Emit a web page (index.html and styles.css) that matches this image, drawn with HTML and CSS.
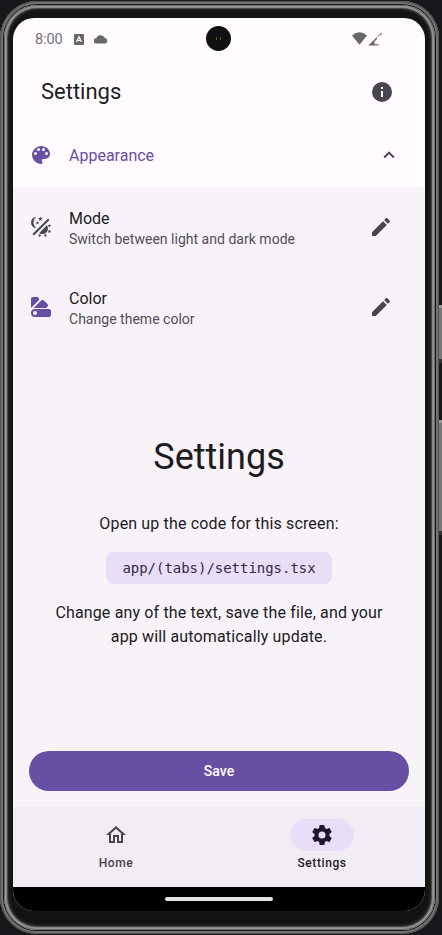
FILE: index.html
```html
<!DOCTYPE html>
<html lang="en">
<head>
<meta charset="utf-8">
<title>Settings</title>
<link rel="stylesheet" href="styles.css">
</head>
<body>
<div class="stage">
  <span class="side-button power"></span>
  <span class="side-button volume"></span>
  <div class="phone">
    <div class="bezel">
    <div class="screen">
      <header class="status">
        <span class="clock">8:00</span>
        <svg class="badge-a" viewBox="0 0 10 11"><path fill="#68676a" d="M1 0h8q1 0 1 1v9q0 1-1 1H1q-1 0-1-1V1q0-1 1-1z"/><path d="M2.600 8 5 2.800 7.400 8M3.500 6.500h3" fill="none" stroke="#fff" stroke-width="1.200"/></svg>
        <svg class="cloud" viewBox="0 0 14 9"><path fill="#68676a" d="M2.600 8.600A2.700 2.700 0 0 1 2.200 3.200A4.600 4.600 0 0 1 10.800 3.100A2.800 2.800 0 0 1 11.200 8.600z"/></svg>
        <span class="camera"><i></i><i></i></span>
        <svg class="signals" viewBox="0 0 30 14"><path fill="#68676a" d="M0 3.400Q7.500-2.800 15 3.400L7.500 12.800z"/><path fill="#68676a" d="M16.300 13.500 25 5V7L22.500 9.500V12.300H26.500V13.500z"/><path d="M25 5 29.500 .5V3H28L26 5z" fill="#68676a"/></svg>
      </header>
      <div class="appbar">
        <h1>Settings</h1>
        <svg class="icon info" viewBox="0 0 24 24"><path d="M13 9h-2V7h2m0 10h-2v-6h2m-1-9A10 10 0 0 0 2 12a10 10 0 0 0 10 10 10 10 0 0 0 10-10A10 10 0 0 0 12 2z"/></svg>
      </div>
      <div class="row accordion">
        <svg class="icon purple" viewBox="0 0 24 24"><path d="M17.500 12A1.500 1.500 0 0 1 16 10.500 1.500 1.500 0 0 1 17.500 9a1.500 1.500 0 0 1 1.500 1.500 1.500 1.500 0 0 1-1.500 1.500m-3-4A1.500 1.500 0 0 1 13 6.500 1.500 1.500 0 0 1 14.500 5 1.500 1.500 0 0 1 16 6.500 1.500 1.500 0 0 1 14.500 8m-5 0A1.500 1.500 0 0 1 8 6.500 1.500 1.500 0 0 1 9.500 5 1.500 1.500 0 0 1 11 6.500 1.500 1.500 0 0 1 9.500 8m-3 4A1.500 1.500 0 0 1 5 10.500 1.500 1.500 0 0 1 6.500 9 1.500 1.500 0 0 1 8 10.500 1.500 1.500 0 0 1 6.500 12M12 3a9 9 0 0 0-9 9 9 9 0 0 0 9 9 1.500 1.500 0 0 0 1.500-1.500c0-.39-.15-.74-.39-1-.23-.27-.38-.62-.38-1a1.500 1.500 0 0 1 1.500-1.500H16a5 5 0 0 0 5-5c0-4.420-4.030-8-9-8z"/></svg>
        <span class="title">Appearance</span>
        <svg class="icon chevron" viewBox="0 0 24 24"><path d="M7.410 15.410 12 10.830l4.590 4.580L18 14l-6-6-6 6z"/></svg>
      </div>
      <main class="content">
        <div class="row item">
          <svg class="icon" viewBox="0 0 24 24"><path d="M7.500 2C5.710 3.150 4.500 5.180 4.500 7.500S5.710 11.850 7.530 13A5.500 5.500 0 0 1 2 7.500 5.500 5.500 0 0 1 7.500 2m11.570 1.500 1.430 1.430L4.930 20.500 3.500 19.070 19.070 3.500m-6.180 2.430L11.410 5 9.970 6l.42-1.700L9 3.240l1.750-.12.580-1.650L12 3.100l1.730.03-1.350 1.130.51 1.670m-3.300 3.610-1.160-.73-1.120.78.340-1.320-1.090-.83 1.360-.09.450-1.290.51 1.270 1.360.03-1.050.87.400 1.310M19 13.500a5.500 5.500 0 0 1-5.500 5.500c-1.220 0-2.350-.4-3.260-1.070l7.690-7.690c.67.91 1.070 2.040 1.070 3.260m-4.400 6.580 2.770-1.150-.24 3.350-2.530-2.200m4.330-2.700 1.150-2.770 2.200 2.540-3.350.23m1.150-4.960-1.140-2.780 3.340.24-2.200 2.540M9.630 18.930l2.770 1.150-2.530 2.190-.24-3.340z"/></svg>
          <div class="copy"><span class="title">Mode</span><span class="sub">Switch between light and dark mode</span></div>
          <svg class="icon pencil" viewBox="0 0 24 24"><path d="M20.710 7.040c.39-.39.39-1.040 0-1.410l-2.340-2.340c-.37-.39-1.020-.39-1.410 0l-1.840 1.830 3.750 3.750M3 17.250V21h3.750L17.810 9.930l-3.750-3.750L3 17.250z"/></svg>
        </div>
        <div class="row item">
          <svg class="icon purple" viewBox="0 0 24 24"><path fill-rule="evenodd" d="M2 12.500V4a2 2 0 0 1 2-2h4a2 2 0 0 1 2 2v1L2.500 12.500zM4.500 13 12.200 5.600a2 2 0 0 1 2.800 0l3.500 3.400a2 2 0 0 1 0 2.800L17 13zM6 14h14a2 2 0 0 1 2 2v4a2 2 0 0 1-2 2H6a4 4 0 0 1 0-8zM6 16a2 2 0 1 0 0 4 2 2 0 0 0 0-4z"/></svg>
          <div class="copy"><span class="title">Color</span><span class="sub">Change theme color</span></div>
          <svg class="icon pencil" viewBox="0 0 24 24"><path d="M20.710 7.040c.39-.39.39-1.040 0-1.410l-2.340-2.340c-.37-.39-1.020-.39-1.410 0l-1.840 1.830 3.750 3.750M3 17.250V21h3.750L17.810 9.930l-3.750-3.750L3 17.250z"/></svg>
        </div>
        <section class="info-block">
          <h2>Settings</h2>
          <p>Open up the code for this screen:</p>
          <code>app/(tabs)/settings.tsx</code>
          <p>Change any of the text, save the file, and your<br>app will automatically update.</p>
        </section>
        <button class="save">Save</button>
      </main>
      <nav class="tabs">
        <a class="tab"><span class="pill"><svg class="icon" viewBox="0 0 24 24"><path d="m12 5.690 5 4.500V18h-2v-6H9v6H7v-7.810l5-4.500M12 3 2 12h3v8h6v-6h2v6h6v-8h3"/></svg></span>Home</a>
        <a class="tab active"><span class="pill"><svg class="icon" viewBox="0 0 24 24"><path d="M12 15.500A3.500 3.500 0 0 1 8.500 12 3.500 3.500 0 0 1 12 8.500a3.500 3.500 0 0 1 3.500 3.500 3.500 3.500 0 0 1-3.500 3.500m7.430-2.530c.04-.32.070-.64.070-.97s-.03-.66-.07-1l2.110-1.630c.19-.15.240-.42.120-.64l-2-3.460c-.12-.22-.39-.31-.61-.22l-2.490 1c-.52-.39-1.060-.73-1.690-.98l-.37-2.650A.506.506 0 0 0 14 2h-4c-.25 0-.46.180-.5.420l-.37 2.650c-.63.250-1.170.590-1.690.98l-2.490-1c-.22-.09-.49 0-.61.220l-2 3.460c-.13.220-.07.490.12.640L4.570 11c-.04.340-.07.670-.07 1s.03.650.07.970l-2.110 1.660c-.19.150-.25.420-.12.640l2 3.460c.12.220.39.300.61.220l2.490-1.010c.52.400 1.060.74 1.690.99l.37 2.650c.04.240.25.420.5.420h4c.25 0 .46-.18.500-.42l.37-2.650c.63-.26 1.170-.59 1.690-.99l2.490 1.010c.22.080.49 0 .61-.22l2-3.460c.12-.22.070-.49-.12-.64z"/></svg></span>Settings</a>
      </nav>
      <footer class="gesture"><span></span></footer>
    </div>
    </div>
  </div>
</div>
</body>
</html>
```
FILE: styles.css
```css
* { box-sizing: border-box; }
body { margin: 0; background: #16171a; font-family: Roboto, sans-serif; color: #1d1b1e; }
.stage { position: relative; width: 442px; height: 935px; overflow: hidden; padding: 1px 3px 1px 0; }
.phone {
  height: 933px;
  padding: 4px;
  border-radius: 37px;
  background: #151515;
  box-shadow: inset 0 0 0 1px #555, inset 0 0 0 2px #6c6c6c, inset 0 0 0 3px #777;
}
.bezel {
  height: 925px;
  padding: 13px 9px 19px;
  border-radius: 33px;
  background: #131313;
  box-shadow: inset 0 0 0 1px #6a6a6a, inset 0 0 0 2px #999, inset 0 0 0 3px #858585, inset 0 0 0 4px #484848, inset 0 0 3px 5px #292929;
}
.side-button { position: absolute; right: 0; width: 3px; background: #777; border-top: 3px solid #999; border-bottom: 4px solid #333; }
.power { top: 305px; height: 58px; }
.volume { top: 420px; height: 115px; }
.screen { display: flex; flex-direction: column; width: 412px; height: 893px; border-radius: 21px; overflow: hidden; background: #fffbff; }
.icon { width: 24px; height: 24px; fill: #49454e; flex: none; display: block; }
.purple { fill: #6750a4; }
.status { position: relative; height: 42px; flex: none; display: flex; align-items: center; padding-left: 22px; color: #747276; }
.clock { font-size: 14.500px; width: 39px; letter-spacing: -.1px; }
.badge-a { width: 10px; height: 11px; }
.cloud { width: 14px; height: 9px; margin-left: 10px; }
.signals { width: 30px; height: 14px; margin-left: auto; margin-right: 43px; }
.camera { position: absolute; left: 193px; top: 8px; width: 25px; height: 25px; border-radius: 50%; background: #111; display: flex; align-items: center; justify-content: center; gap: 3px; }
.camera i { width: 1px; height: 3px; background: #66502c; }
.appbar { height: 63px; flex: none; display: flex; align-items: center; justify-content: space-between; padding: 0 31px 0 28px; }
h1 { margin: 0; font-size: 22px; line-height: 28px; font-weight: 400; }
.row { display: flex; align-items: center; padding-left: 15.500px; }
.accordion { height: 64px; flex: none; color: #6750a4; }
.title { font-size: 16px; line-height: 20px; margin-left: 16.500px; }
.accordion .title { padding-top: 2px; }
.chevron { width: 22px; height: 22px; margin-left: auto; margin-right: 25.500px; }
.content { height: 620px; flex: none; display: flex; flex-direction: column; background: #f7f3f9; }
.item { height: 80px; }
.copy { display: flex; flex-direction: column; margin-left: 16.500px; padding-top: 3px; }
.copy .title { margin: 0; }
.sub { font-size: 14px; line-height: 20px; letter-spacing: .02px; color: #524e57; }
.pencil { margin-left: auto; margin-right: 32.500px; }
.info-block { display: flex; flex-direction: column; align-items: center; padding-top: 88px; }
h2 { margin: 0 0 33px; font-size: 36px; line-height: 44px; font-weight: 400; }
p { margin: 0; font-size: 16px; line-height: 24px; letter-spacing: .15px; text-align: center; }
code { margin: 16px 0 17px; height: 32px; padding: 0 16px; border-radius: 8px; background: #e8def8; color: #302b3f; font: 14px/32px "DejaVu Sans Mono", monospace; letter-spacing: -.03px; }
.save { height: 40px; margin: auto 16px 16px; border: 0; border-radius: 20px; background: #6750a4; color: #fff; font: 500 14px/20px Roboto, sans-serif; letter-spacing: .1px; }
.tabs { height: 80px; flex: none; display: flex; background: #f2edf5; }
.tab { flex: 1; display: flex; flex-direction: column; align-items: center; padding-top: 12px; color: #49454e; font-size: 12px; line-height: 16px; font-weight: 500; letter-spacing: .6px; }
.pill { width: 64px; height: 32px; border-radius: 16px; display: grid; place-items: center; margin-bottom: 4px; }
.active { color: #1d1b1e; }
.active .pill { background: #e8def8; }
.active .icon { fill: #1d192b; }
.gesture { flex: 1; background: #000; display: flex; justify-content: center; padding-top: 10px; }
.gesture span { width: 108px; height: 4px; border-radius: 2px; background: #e5e5e5; }
```
